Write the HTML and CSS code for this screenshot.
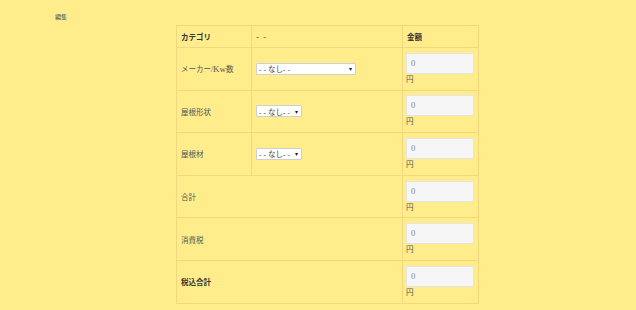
FILE: index.html
```html
<!DOCTYPE html>
<html lang="ja">
<head>
<meta charset="utf-8">
<link rel="stylesheet" href="styles.css">
</head>
<body>
<div class="page">
  <div class="title">編集</div>
  <table class="form">
    <colgroup><col class="c1"><col class="c2"><col class="c3"></colgroup>
    <tr class="head">
      <th>カテゴリ</th>
      <td class="dash">- -</td>
      <th>金額</th>
    </tr>
    <tr>
      <td class="label">メーカー/<span class="latin">Kw</span>数</td>
      <td><div class="select wide"><span><span class="d">--</span>なし<span class="d">--</span></span><span class="arrow">▾</span></div></td>
      <td class="amount"><div class="input">0</div><div class="yen">円</div></td>
    </tr>
    <tr>
      <td class="label">屋根形状</td>
      <td><div class="select"><span><span class="d">--</span>なし<span class="d">--</span></span><span class="arrow">▾</span></div></td>
      <td class="amount"><div class="input">0</div><div class="yen">円</div></td>
    </tr>
    <tr>
      <td class="label">屋根材</td>
      <td><div class="select"><span><span class="d">--</span>なし<span class="d">--</span></span><span class="arrow">▾</span></div></td>
      <td class="amount"><div class="input">0</div><div class="yen">円</div></td>
    </tr>
    <tr>
      <td class="label" colspan="2">合計</td>
      <td class="amount"><div class="input">0</div><div class="yen">円</div></td>
    </tr>
    <tr>
      <td class="label" colspan="2">消費税</td>
      <td class="amount"><div class="input">0</div><div class="yen">円</div></td>
    </tr>
    <tr>
      <td class="label strong" colspan="2">税込合計</td>
      <td class="amount"><div class="input">0</div><div class="yen">円</div></td>
    </tr>
  </table>
</div>
</body>
</html>
```
FILE: styles.css
```css
html, body {
  margin: 0;
  padding: 0;
  background: #ffec8b;
}
body {
  font-family: "Liberation Serif", "Noto Sans CJK JP", serif;
  font-size: 7.5px;
  color: #555;
}
.page {
  padding: 13px 0 0 55px;
}
.title {
  font-size: 6px;
  line-height: 8px;
  height: 12px;
  color: #444;
}
.form {
  border-collapse: collapse;
  margin-left: 121px;
  width: 303px;
  table-layout: fixed;
}
.c1 { width: 75px; }
.c2 { width: 151px; }
.c3 { width: 76px; }
.form th, .form td {
  border: 1px solid #efd87e;
  padding: 0 4px;
  text-align: left;
  vertical-align: middle;
  font-weight: normal;
}
.form tr.head th, .form tr.head td {
  height: 21px;
  padding: 0 4px;
}
.form th {
  font-weight: bold;
  color: #333;
}
.dash {
  color: #555;
  font-size: 9px;
  letter-spacing: 1px;
}
.label {
  color: #555;
}
.latin {
  font-size: 9px;
}
.label.strong {
  font-weight: bold;
  color: #333;
}
.amount {
  padding: 4px 4px 4px 3px !important;
  height: 33.6px;
}
.input {
  box-sizing: border-box;
  width: 68px;
  height: 21px;
  background: #f6f6f6;
  border: 1px solid #e4e4e4;
  color: #888;
  padding-left: 4px;
  line-height: 19px;
  font-size: 8.5px;
}
.yen {
  line-height: 10px;
  margin-top: 1px;
  color: #555;
}
.select {
  box-sizing: border-box;
  display: inline-flex;
  align-items: center;
  justify-content: space-between;
  height: 12px;
  width: 46px;
  background: #fff;
  border: 1px solid #cfcfcf;
  border-radius: 1px;
  padding: 0 3px 0 2px;
  color: #444;
  font-size: 7.5px;
  font-family: "Noto Sans CJK JP", sans-serif;
}
.select .d {
  letter-spacing: 2px;
  font-family: "Liberation Sans", sans-serif;
}
.select.wide {
  width: 100px;
}
.arrow {
  font-size: 6px;
  color: #222;
}
```
